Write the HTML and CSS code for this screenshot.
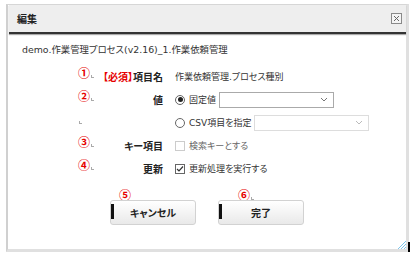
FILE: index.html
```html
<!DOCTYPE html>
<html lang="ja">
<head>
    <meta charset="UTF-8">
    <title>編集</title>
    <link rel="stylesheet" href="styles.css">
</head>
<body>
    <div class="dialog">
        <div class="titlebar">
            <span class="title">編集</span>
            <span class="close">
                <svg width="11" height="11" viewBox="0 0 11 11">
                    <rect x="0.5" y="0.5" width="10" height="10" fill="#f4f4f4" stroke="#8a8a8a"/>
                    <path d="M3 3 L8 8 M8 3 L3 8" stroke="#666" stroke-width="1"/>
                </svg>
            </span>
        </div>

        <div class="content">
            <div class="subtitle">demo.作業管理プロセス(v2.16)_1.作業依頼管理</div>

            <div class="form">
                <div class="row">
                    <span class="num">①<i class="tick"></i></span>
                    <span class="label"><span class="req">【必須】</span>項目名</span>
                    <span class="value">作業依頼管理.プロセス種別</span>
                </div>
                <div class="row">
                    <span class="num">②<i class="tick"></i></span>
                    <span class="label">値</span>
                    <span class="value">
                        <span class="radio checked"></span>
                        <span class="opt">固定値</span>
                        <span class="select">
                            <svg width="8" height="5" viewBox="0 0 8 5"><path d="M1 1 L4 4 L7 1" fill="none" stroke="#777"/></svg>
                        </span>
                    </span>
                </div>
                <div class="row">
                    <span class="num"><i class="tick"></i></span>
                    <span class="label"></span>
                    <span class="value">
                        <span class="radio"></span>
                        <span class="opt">CSV項目を指定</span>
                        <span class="select disabled">
                            <svg width="8" height="5" viewBox="0 0 8 5"><path d="M1 1 L4 4 L7 1" fill="none" stroke="#bbb"/></svg>
                        </span>
                    </span>
                </div>
                <div class="row">
                    <span class="num">③<i class="tick"></i></span>
                    <span class="label">キー項目</span>
                    <span class="value">
                        <span class="check disabled"></span>
                        <span class="opt muted">検索キーとする</span>
                    </span>
                </div>
                <div class="row">
                    <span class="num">④<i class="tick"></i></span>
                    <span class="label">更新</span>
                    <span class="value">
                        <span class="check">
                            <svg width="10" height="10" viewBox="0 0 10 10"><path d="M2 5 L4 7 L8 2.5" fill="none" stroke="#333" stroke-width="1.2"/></svg>
                        </span>
                        <span class="opt">更新処理を実行する</span>
                    </span>
                </div>
            </div>

            <div class="buttons">
                <div class="btn-wrap cancel">
                    <span class="num">⑤</span>
                    <button class="btn">キャンセル</button>
                </div>
                <div class="btn-wrap done">
                    <span class="num">⑥<i class="tick"></i></span>
                    <button class="btn">完了</button>
                </div>
            </div>
        </div>

        <svg class="grip" width="9" height="9" viewBox="0 0 9 9">
            <path d="M9 1 L1 9 M9 4 L4 9 M9 7 L7 9" stroke="#7cc4ec" stroke-width="1"/>
        </svg>
        <span class="cursor"></span>
    </div>
</body>
</html>
```

FILE: styles.css
```css
body {
    margin: 0;
    background: #fff;
    font-family: "DejaVu Sans", "Noto Sans CJK JP", sans-serif;
    font-size: 9px;
    font-feature-settings: "palt";
    color: #333;
}
.dialog {
    position: relative;
    box-sizing: border-box;
    width: 403px;
    height: 248px;
    margin: 4px 0 0 6px;
    padding-left: 1px;
    border-top: 1px solid #d6d6d6;
    border-left: 2px solid #d0d0d0;
    border-right: 3px solid #e0e0e0;
    border-bottom: 3px solid #e0e0e0;
}
.titlebar {
    display: flex;
    align-items: center;
    justify-content: space-between;
    height: 27px;
    padding: 0 4px 0 8px;
    background: #eeeeee;
    border-bottom: 2px solid #333;
    box-shadow: 0 1px 1px #aaa;
}
.title {
    font-size: 10px;
    font-weight: bold;
    color: #222;
}
.close svg {
    display: block;
}
.content {
    padding: 9px 0 0 13px;
}
.subtitle {
    font-size: 9.4px;
    line-height: 14px;
}
.form {
    margin: 8px 0 0 56px;
}
.row {
    display: flex;
    align-items: center;
    height: 23px;
}
.num {
    align-self: flex-start;
    width: 20px;
    margin-top: 1px;
    font-family: "Noto Sans CJK JP", sans-serif;
    font-size: 12px;
    font-weight: bold;
    line-height: 14px;
    color: #e60000;
}
.tick {
    display: inline-block;
    width: 2px;
    height: 2px;
    margin-left: 1px;
    border-left: 1px solid #aaa;
    border-bottom: 1px solid #aaa;
}
.label {
    width: 65px;
    margin-right: 12px;
    text-align: right;
    white-space: nowrap;
    font-size: 10px;
    font-weight: bold;
    color: #222;
}
.req {
    color: #e60000;
}
.value {
    display: flex;
    align-items: center;
    white-space: nowrap;
}
.radio {
    box-sizing: border-box;
    display: flex;
    align-items: center;
    justify-content: center;
    width: 10px;
    height: 10px;
    border: 1px solid #666;
    border-radius: 50%;
}
.radio.checked::after {
    content: "";
    width: 5px;
    height: 5px;
    border-radius: 50%;
    background: #222;
}
.check {
    box-sizing: border-box;
    width: 10px;
    height: 10px;
    border: 1px solid #666;
}
.check svg {
    display: block;
    margin: -1px;
}
.check.disabled {
    border-color: #ccc;
}
.opt {
    margin-left: 4px;
}
.muted {
    color: #666;
}
.select {
    box-sizing: border-box;
    display: flex;
    align-items: center;
    justify-content: flex-end;
    width: 115px;
    height: 16px;
    margin-left: 3px;
    padding-right: 5px;
    border: 1px solid #aaa;
    background: #fff;
}
.select.disabled {
    border-color: #ddd;
}
.buttons {
    display: flex;
    justify-content: center;
    gap: 22px;
    margin: 10px 0 0 -14px;
}
.btn-wrap {
    display: flex;
    flex-direction: column;
}
.btn-wrap .num {
    align-self: auto;
    width: auto;
    height: 10px;
    margin: 0;
    line-height: 10px;
    font-size: 12px;
}
.cancel .num {
    padding-left: 9px;
}
.done .num {
    padding-left: 20px;
}
.btn {
    position: relative;
    width: 86px;
    height: 25px;
    border: 1px solid #d2d2d2;
    border-radius: 3px;
    background: linear-gradient(#ffffff, #e9e9e9);
    font-family: "Noto Sans CJK JP", sans-serif;
    font-size: 10px;
    font-weight: bold;
    font-feature-settings: "palt";
    color: #222;
}
.btn::before {
    content: "";
    position: absolute;
    left: 0;
    top: 3px;
    width: 3px;
    height: 15px;
    background: #111;
}
.grip {
    position: absolute;
    right: 0;
    bottom: 0;
}
.cursor {
    position: absolute;
    right: -4px;
    bottom: -3px;
    width: 2px;
    height: 10px;
    background: #000;
}
```
